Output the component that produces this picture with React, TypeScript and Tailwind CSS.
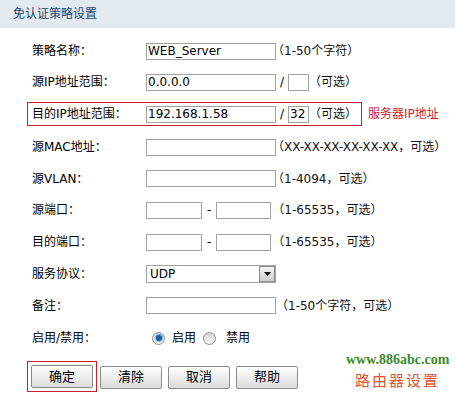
import React from 'react';

const font = 'font-["DejaVu_Sans","Noto_Sans_CJK_SC",sans-serif]';

function TextBox({ value = '', w = 'w-[130px]' }: { value?: string; w?: string }) {
  return (
    <div className={`${w} h-[17px] border border-[#a3a3a3] bg-white px-[1px] text-[12px] leading-[15px] text-black`}>
      {value}
    </div>
  );
}

function Row({ label, h = 'h-[32px]', children }: { label: string; h?: string; children?: React.ReactNode }) {
  return (
    <div className={`flex items-center ${h} pl-[32px]`}>
      <div className="w-[114px] shrink-0 text-[12px] text-black">{label}</div>
      {children}
    </div>
  );
}

function Hint({ children, className = '' }: { children: React.ReactNode; className?: string }) {
  return <span className={`text-[12px] text-[#111] whitespace-nowrap ${className}`}>{children}</span>;
}

function Radio({ checked }: { checked?: boolean }) {
  return (
    <span className="flex h-[13px] w-[13px] items-center justify-center rounded-full border border-[#8f8f8f] bg-linear-to-b from-[#d4d4d4] to-[#fafafa]">
      {checked && <span className="h-[6px] w-[6px] rounded-full bg-[#1d5b9e] shadow-[0_0_1px_1px_#7fb0de]" />}
    </span>
  );
}

function Btn({ children }: { children: React.ReactNode }) {
  return (
    <button className="h-[23px] w-[62px] rounded-[2px] border border-[#8c8c8c] bg-linear-to-b from-[#ffffff] to-[#dcdcdc] text-[13px] text-black">
      {children}
    </button>
  );
}

export default function App() {
  return (
    <div className={`relative h-[396px] w-[455px] overflow-hidden bg-white ${font}`}>
      <div className="flex h-[28px] items-center bg-[#e2eaf0] pl-[13px] text-[12px] text-[#24466e]">
        免认证策略设置
      </div>

      <div className="mt-[7px] flex flex-col">
        <Row label="策略名称：">
          <TextBox value="WEB_Server" />
          <Hint className="ml-[-4px]">（1-50个字符）</Hint>
        </Row>
        <Row label="源IP地址范围：" h="h-[30px]">
          <TextBox value="0.0.0.0" />
          <span className="ml-[4px] text-[12px]">/</span>
          <div className="ml-[4px]"><TextBox w="w-[21px]" /></div>
          <Hint>（可选）</Hint>
        </Row>

        <div className="mt-[5px] flex items-center">
          <div className="ml-[27px] flex h-[24px] items-center border border-[#c8202c] pl-[4px] pr-[4px]">
            <div className="w-[114px] shrink-0 text-[12px] text-black">目的IP地址范围：</div>
            <TextBox value="192.168.1.58" />
            <span className="ml-[4px] text-[12px]">/</span>
            <div className="ml-[4px]"><TextBox value="32" w="w-[21px]" /></div>
            <Hint>（可选）</Hint>
          </div>
          <span className="ml-[6px] text-[12px] text-[#d21f2a]">服务器IP地址</span>
        </div>

        <Row label="源MAC地址：" h="mt-[5px] h-[32px]">
          <TextBox />
          <Hint className="ml-[-4px]">（XX-XX-XX-XX-XX-XX，可选）</Hint>
        </Row>
        <Row label="源VLAN：" h="h-[31px]">
          <TextBox />
          <Hint className="ml-[-4px]">（1-4094，可选）</Hint>
        </Row>
        <Row label="源端口：">
          <TextBox w="w-[56px]" />
          <span className="ml-[5px] text-[12px]">-</span>
          <div className="ml-[5px]"><TextBox w="w-[55px]" /></div>
          <Hint className="ml-[1px]">（1-65535，可选）</Hint>
        </Row>
        <Row label="目的端口：">
          <TextBox w="w-[56px]" />
          <span className="ml-[5px] text-[12px]">-</span>
          <div className="ml-[5px]"><TextBox w="w-[55px]" /></div>
          <Hint className="ml-[1px]">（1-65535，可选）</Hint>
        </Row>
        <Row label="服务协议：">
          <div className="flex h-[18px] w-[130px] items-center justify-between border border-[#a3a3a3] bg-white pl-[3px] text-[12px]">
            <span>UDP</span>
            <span className="flex h-[16px] w-[16px] items-center justify-center border border-[#8a8a8a] bg-linear-to-b from-[#f2f2f2] to-[#cfcfcf]">
              <svg width="7" height="4" viewBox="0 0 7 4"><path d="M0 0h7L3.5 4z" fill="#111" /></svg>
            </span>
          </div>
        </Row>
        <Row label="备注：" h="h-[31px]">
          <TextBox />
          <Hint className="ml-[0px]">（1-50个字符，可选）</Hint>
        </Row>
        <Row label="启用/禁用：" h="h-[34px]">
          <div className="ml-[6px] flex items-center text-[12px]">
            <Radio checked />
            <span className="ml-[7px]">启用</span>
            <span className="ml-[7px]"><Radio /></span>
            <span className="ml-[10px]">禁用</span>
          </div>
        </Row>

        <div className="mt-[6px] flex items-center">
          <div className="ml-[27px] flex h-[31px] items-center border border-[#c8202c] pl-[3px] pr-[3px]">
            <Btn>确定</Btn>
          </div>
          <div className="ml-[3px]"><Btn>清除</Btn></div>
          <div className="ml-[6px]"><Btn>取消</Btn></div>
          <div className="ml-[6px]"><Btn>帮助</Btn></div>
        </div>
      </div>

      <div className='absolute left-[346px] top-[351px] font-["Liberation_Serif",serif] text-[14px] font-bold leading-[18px] text-[#3d8a2c]'>
        www.886abc.com
      </div>
      <div className="absolute left-[355px] top-[372px] text-[15px] leading-[18px] tracking-[2px] text-[#e5552e]">
        路由器设置
      </div>
    </div>
  );
}
